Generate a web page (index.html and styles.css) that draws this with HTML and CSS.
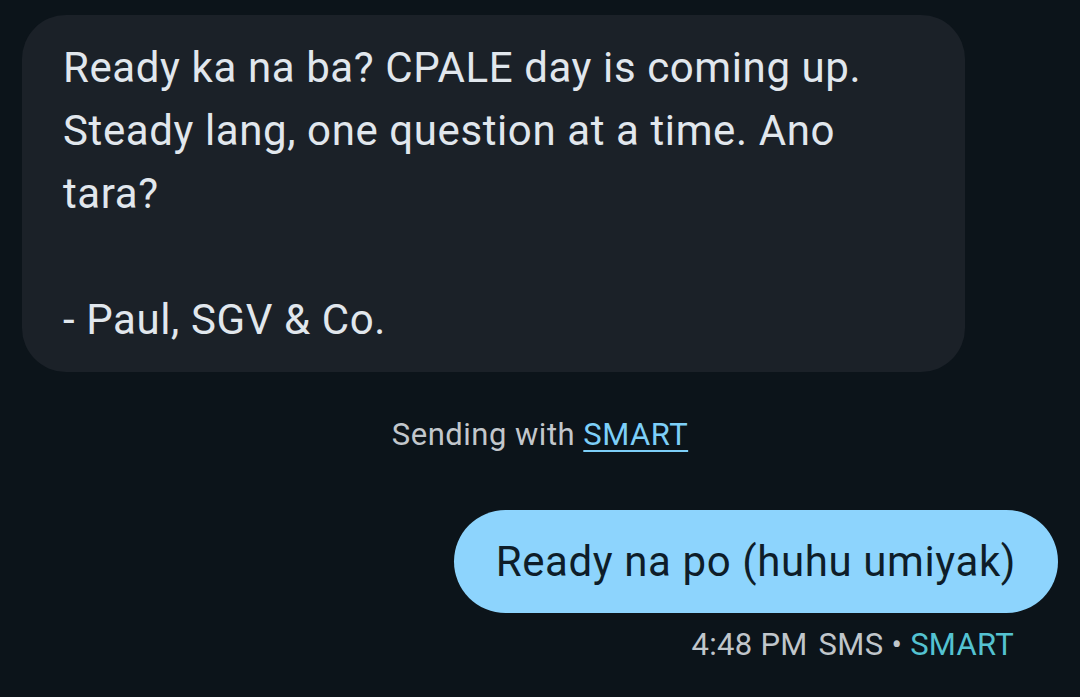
FILE: index.html
```html
<!DOCTYPE html>
<html lang="en">
<head>
    <meta charset="UTF-8">
    <meta name="viewport" content="width=device-width, initial-scale=1.0">
    <title>Messages</title>
    <link rel="stylesheet" href="styles.css">
</head>
<body>
    <div class="thread">
        <!-- Incoming message -->
        <div class="bubble incoming">
            Ready ka na ba? CPALE day is coming up.<br>
            Steady lang, one question at a time. Ano<br>
            tara?<br>
            <br>
            - Paul, SGV &amp; Co.
        </div>

        <p class="sim-note">Sending with <a href="#">SMART</a></p>

        <!-- Outgoing message -->
        <div class="bubble outgoing">Ready na po (huhu umiyak)</div>
        <p class="meta">4:48 PM <span class="kind">SMS</span> • <span class="carrier">SMART</span></p>
    </div>
</body>
</html>
```

FILE: styles.css
```css
body {
    margin: 0;
    padding: 0;
    font-family: 'Roboto', 'Liberation Sans', sans-serif;
    background-color: #0c141a;
    height: 100vh;
    overflow: hidden;
}
.thread {
    display: flex;
    flex-direction: column;
    padding: 15px 22px 0 22px;
}
.bubble {
    font-size: 42px;
    line-height: 63px;
    letter-spacing: 0.6px;
}
.incoming {
    align-self: flex-start;
    width: 943px;
    box-sizing: border-box;
    padding: 21px 40px 21px 41px;
    background-color: #1b2128;
    color: #e1e7ed;
    border-radius: 44px;
}
.sim-note {
    margin: 43px 0 0 0;
    text-align: center;
    font-size: 31px;
    line-height: 40px;
    letter-spacing: 0.5px;
    color: #c2c7cc;
}
.sim-note a {
    color: #7dcff8;
    text-decoration: underline;
    text-decoration-thickness: 2px;
    text-underline-offset: 5px;
}
.outgoing {
    align-self: flex-end;
    margin-top: 55px;
    padding: 20px 42px;
    background-color: #8dd4fd;
    color: #0e1d29;
    border-radius: 52px;
}
.meta {
    align-self: flex-end;
    margin: 12px 44px 0 0;
    font-size: 31px;
    line-height: 40px;
    letter-spacing: 0.3px;
    color: #c0c6cb;
}
.kind {
    margin-left: 3px;
}
.carrier {
    color: #54c2d1;
}
```
